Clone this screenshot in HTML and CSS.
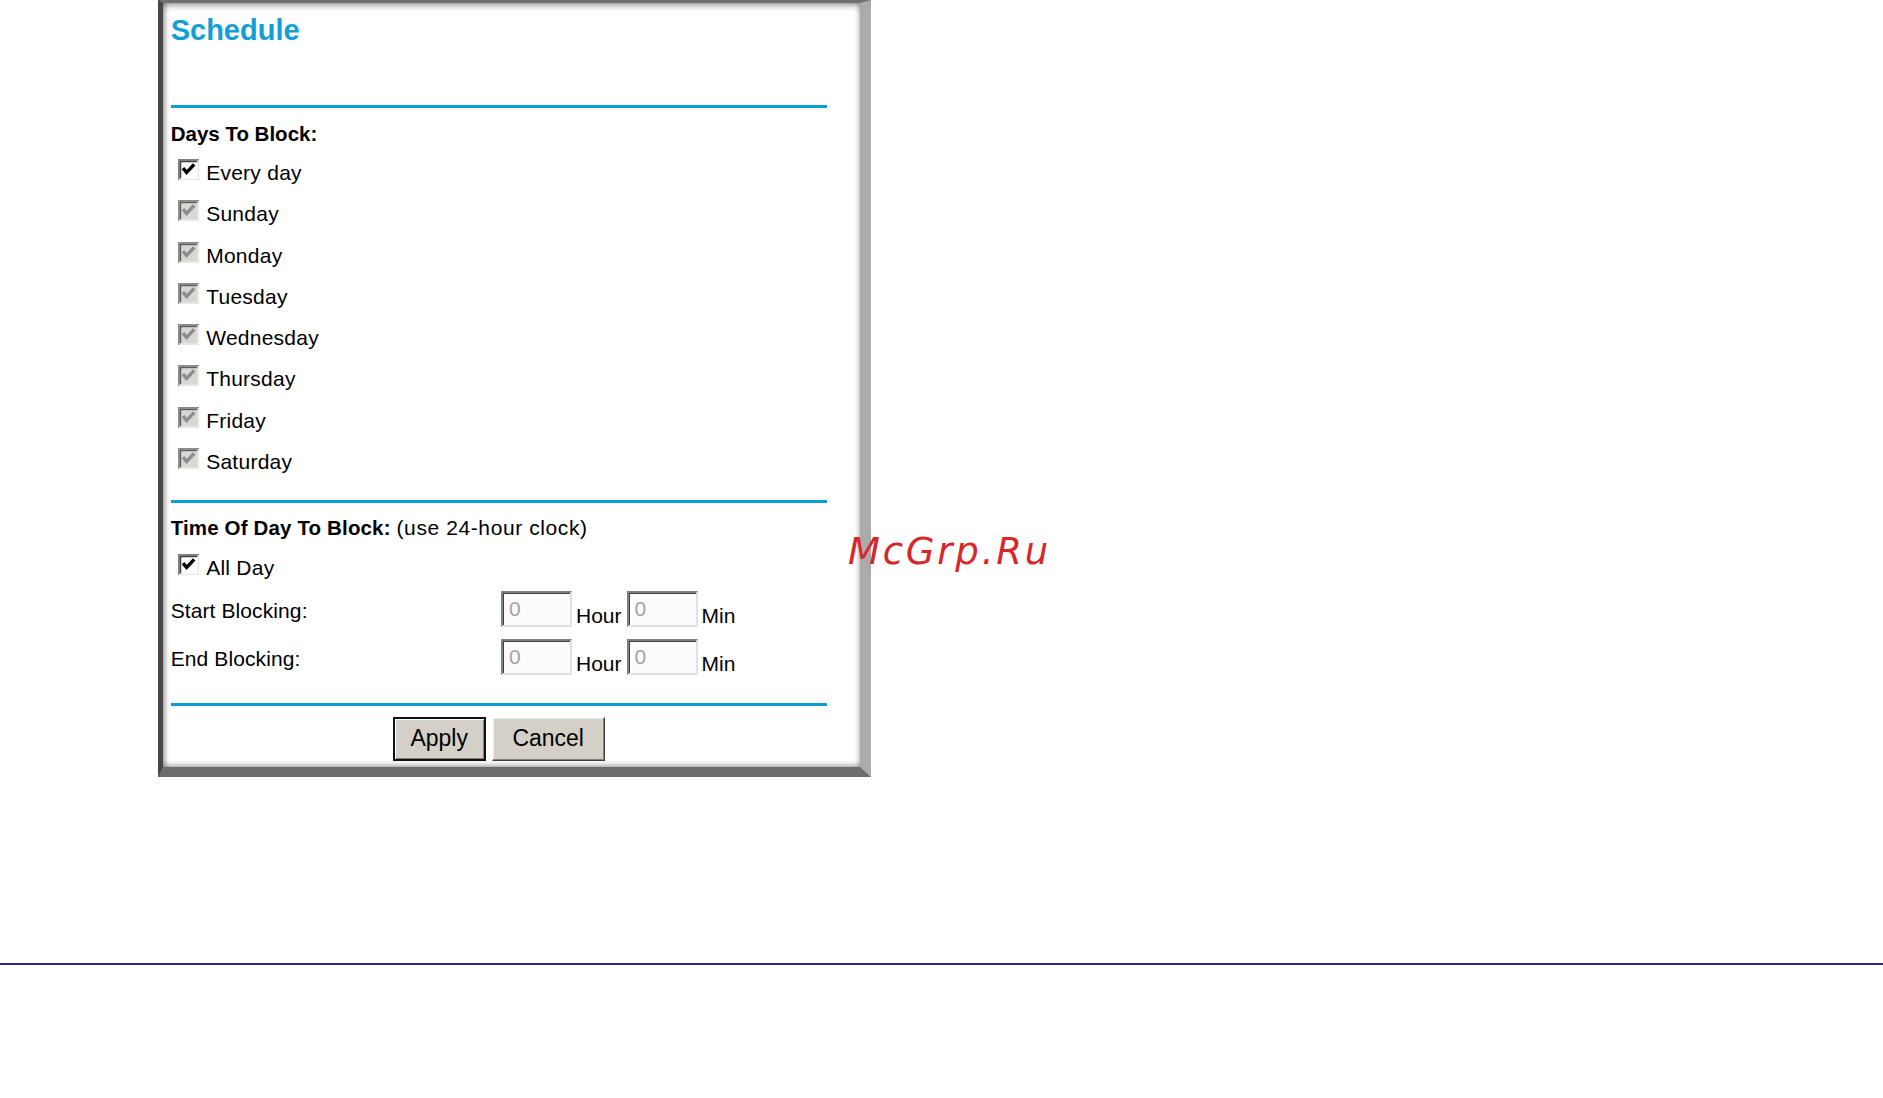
FILE: index.html
```html
<!DOCTYPE html>
<html lang="en">
<head>
<meta charset="utf-8">
<title>Schedule</title>
<link rel="stylesheet" href="styles.css">
</head>
<body>
<svg class="defs" width="0" height="0" aria-hidden="true">
  <symbol id="cb-on" viewBox="0 0 21 21">
    <rect x="0" y="0" width="21" height="21" fill="#ffffff"/>
    <path d="M0 0H21V1.5H1.5V21H0Z" fill="#808080"/>
    <path d="M1.5 1.5H19.5V3.5H3.5V19.5H1.5Z" fill="#404040"/>
    <path d="M19.5 1.5H21V21H1.5V19.5H19.5Z" fill="#e6e6e6"/>
    <rect x="3.5" y="3.5" width="16" height="16" fill="#ffffff"/>
    <path d="M5 9.2L8.6 13.4L16.2 5.4" stroke="#000" stroke-width="3.4" fill="none"/>
  </symbol>
  <symbol id="cb-dis" viewBox="0 0 21 21">
    <rect x="0" y="0" width="21" height="21" fill="#ffffff"/>
    <path d="M0 0H21V1.5H1.5V21H0Z" fill="#8a8a8a"/>
    <path d="M1.5 1.5H19.5V3.5H3.5V19.5H1.5Z" fill="#5a5a5a"/>
    <path d="M19.5 1.5H21V21H1.5V19.5H19.5Z" fill="#e6e6e6"/>
    <rect x="3.5" y="3.5" width="16" height="16" fill="#d9d7d2"/>
    <path d="M5 9.2L8.6 13.4L16.2 5.4" stroke="#8c8c8c" stroke-width="3.4" fill="none"/>
  </symbol>
</svg>

<div class="page">
  <div class="panel">
    <div class="title">Schedule</div>
    <div class="rule"></div>

    <div class="section-head">Days To Block:</div>
    <div class="days">
      <div class="cb-row"><svg class="cb"><use href="#cb-on"/></svg><span class="cb-label">Every day</span></div>
      <div class="cb-row"><svg class="cb"><use href="#cb-dis"/></svg><span class="cb-label">Sunday</span></div>
      <div class="cb-row"><svg class="cb"><use href="#cb-dis"/></svg><span class="cb-label">Monday</span></div>
      <div class="cb-row"><svg class="cb"><use href="#cb-dis"/></svg><span class="cb-label">Tuesday</span></div>
      <div class="cb-row"><svg class="cb"><use href="#cb-dis"/></svg><span class="cb-label">Wednesday</span></div>
      <div class="cb-row"><svg class="cb"><use href="#cb-dis"/></svg><span class="cb-label">Thursday</span></div>
      <div class="cb-row"><svg class="cb"><use href="#cb-dis"/></svg><span class="cb-label">Friday</span></div>
      <div class="cb-row"><svg class="cb"><use href="#cb-dis"/></svg><span class="cb-label">Saturday</span></div>
    </div>

    <div class="rule rule-2"></div>

    <div class="section-head section-head-2"><b>Time Of Day To Block:</b> <span class="note">(use 24-hour clock)</span></div>
    <div class="cb-row allday"><svg class="cb cb-2"><use href="#cb-on"/></svg><span class="cb-label">All Day</span></div>

    <div class="time-row">
      <span class="time-label">Start Blocking:</span>
      <input class="time-input" type="text" value="0" readonly>
      <span class="unit">Hour</span>
      <input class="time-input" type="text" value="0" readonly>
      <span class="unit">Min</span>
    </div>
    <div class="time-row">
      <span class="time-label">End Blocking:</span>
      <input class="time-input" type="text" value="0" readonly>
      <span class="unit">Hour</span>
      <input class="time-input" type="text" value="0" readonly>
      <span class="unit">Min</span>
    </div>

    <div class="rule rule-3"></div>

    <div class="buttons">
      <button class="btn btn-default" type="button">Apply</button>
      <button class="btn" type="button">Cancel</button>
    </div>
  </div>

  <div class="watermark">McGrp.Ru</div>
</div>

<div class="footer-line"></div>
</body>
</html>
```

FILE: styles.css
```css
html, body {
  margin: 0;
  padding: 0;
  background: #ffffff;
}

body {
  font-family: "Liberation Sans", Arial, sans-serif;
  color: #000000;
  width: 1883px;
}

.defs {
  position: absolute;
  width: 0;
  height: 0;
  overflow: hidden;
}

.page {
  position: relative;
  padding-left: 158px;
}

.panel {
  width: 713px;
  box-sizing: border-box;
  border-left: 5px solid #474747;
  border-right: 11px solid #ababab;
  border-top: 3px solid #707070;
  border-bottom: 10px solid #6c6c6c;
  padding: 0 0 6px 7.7px;
  background: #ffffff;
  box-shadow:
    inset 4px 0 4px -1px rgba(0, 0, 0, 0.28),
    inset 0 6px 6px -3px rgba(0, 0, 0, 0.32),
    inset -4px 0 4px -2px rgba(0, 0, 0, 0.18),
    inset 0 -5px 5px -2px rgba(0, 0, 0, 0.22);
}

.title {
  height: 102px;
  box-sizing: border-box;
  padding-top: 9.6px;
  font-size: 29px;
  line-height: 34px;
  font-weight: bold;
  color: #129fd6;
}

.rule {
  width: 656px;
  height: 3px;
  background: #0c9dd7;
}

.rule-2 {
  margin-top: 17.8px;
}

.rule-3 {
  margin-top: 17.7px;
}

.section-head {
  padding-top: 12px;
  font-size: 20.5px;
  line-height: 28px;
  font-weight: bold;
  white-space: nowrap;
}

.section-head-2 {
  padding-top: 11px;
  letter-spacing: 0.15px;
}

.section-head-2 .note {
  font-weight: normal;
  font-size: 21px;
  letter-spacing: 0.6px;
}

.days {
  margin-top: 4px;
}

.cb-row {
  display: flex;
  align-items: flex-start;
  height: 41.3px;
}

.cb {
  width: 21px;
  height: 21px;
  flex: none;
  margin-left: 7px;
  margin-top: 7px;
}

.cb-label {
  margin-left: 7.5px;
  font-size: 21px;
  line-height: 41.3px;
  letter-spacing: 0.25px;
}

.allday {
  margin-top: 5px;
  margin-bottom: 1.2px;
}

.cb-2 {
  margin-top: 7px;
}

.time-row {
  display: flex;
  align-items: flex-start;
  height: 48px;
}

.time-label {
  width: 330.3px;
  flex: none;
  font-size: 21px;
  line-height: 41px;
  letter-spacing: 0.1px;
}

.time-input {
  width: 71px;
  height: 36.5px;
  margin: 1.2px 0 0 0;
  box-sizing: border-box;
  padding: 0 0 0 6px;
  border: 2px solid;
  border-color: #808080 #e2e2e2 #e2e2e2 #808080;
  box-shadow: inset 1px 1px 0 #404040;
  background: #fcfcfc;
  font-family: "Liberation Sans", Arial, sans-serif;
  font-size: 21px;
  color: #a3a3a3;
  outline: none;
}

.unit {
  margin: 0 5px 0 4px;
  font-size: 21px;
  line-height: 51px;
}

.buttons {
  width: 656px;
  margin-top: 11px;
  display: flex;
  justify-content: center;
  gap: 6px;
}

.btn {
  height: 44px;
  width: 113px;
  box-sizing: border-box;
  padding: 0 0 2px 0;
  background: #d4d0c8;
  border: 1px solid;
  border-color: #ffffff #404040 #404040 #ffffff;
  box-shadow: inset -1px -1px 0 #808080, inset 1px 1px 0 #eeeeee;
  font-family: "Liberation Sans", Arial, sans-serif;
  font-size: 23px;
  color: #000000;
}

.btn-default {
  width: 93px;
  border: 2px solid #111111;
  box-shadow: inset 1px 1px 0 #ffffff, inset -1px -1px 0 #808080;
  padding-bottom: 2px;
}

.watermark {
  position: absolute;
  left: 848px;
  top: 532.5px;
  font-family: "DejaVu Sans", Verdana, sans-serif;
  font-style: italic;
  font-size: 37px;
  line-height: 37px;
  letter-spacing: 2.8px;
  color: #d8262b;
  white-space: nowrap;
}

.footer-line {
  margin-top: 186px;
  height: 2px;
  background: #2b2b88;
}
```
